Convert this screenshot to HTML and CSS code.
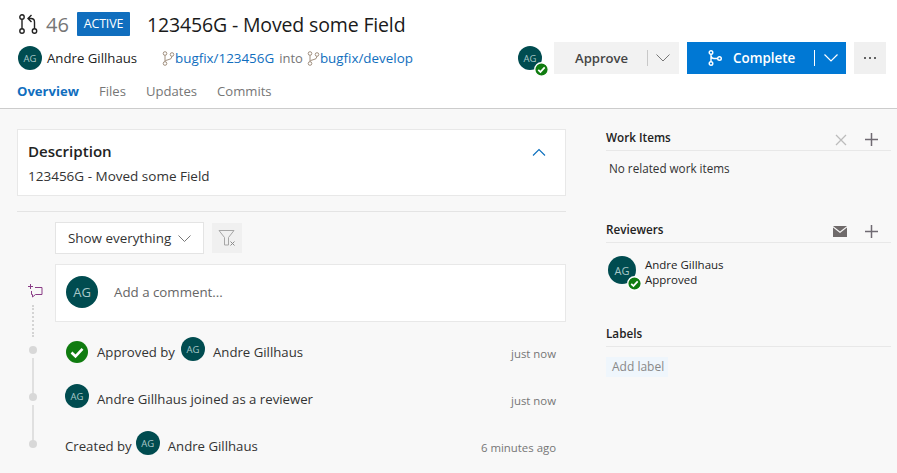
FILE: index.html
```html
<!DOCTYPE html>
<html lang="en">
<head>
<meta charset="utf-8">
<title>Pull request 46</title>
<link rel="stylesheet" href="styles.css">
</head>
<body>
<header class="header">
  <div class="title-row">
    <svg class="pr-icon" width="20" height="20" viewBox="0 0 20 20"><g fill="none" stroke="#222" stroke-width="1.4"><circle cx="4" cy="3" r="2.2"/><circle cx="4" cy="17" r="2.2"/><circle cx="16.500" cy="17" r="2.2"/><path d="M4 5.200v9.600M16.500 14.800V8q0-3.500-3.500-3.500h-2.500M13.500 1l-3.500 3.500 3.500 3.500"/></g></svg>
    <span class="pr-id">46</span>
    <span class="badge">ACTIVE</span>
    <h1 class="pr-title">123456G - Moved some Field</h1>
  </div>
  <div class="meta-row">
    <span class="avatar av24">AG</span>
    <span class="author">Andre Gillhaus</span>
    <svg class="branch first" width="13" height="15" viewBox="0 0 13 15"><g fill="none" stroke="#a08f7e" stroke-width="1"><circle cx="3" cy="2.500" r="1.800"/><circle cx="3" cy="12.500" r="1.800"/><circle cx="10" cy="3.500" r="1.800"/><path d="M3 4.300v6.400M10 5.300q0 3-4 3.500-3 .5-3 1.500"/></g></svg>
    <a class="link">bugfix/123456G</a>
    <span class="into">into</span>
    <svg class="branch" width="13" height="15" viewBox="0 0 13 15"><g fill="none" stroke="#a08f7e" stroke-width="1"><circle cx="3" cy="2.500" r="1.800"/><circle cx="3" cy="12.500" r="1.800"/><circle cx="10" cy="3.500" r="1.800"/><path d="M3 4.300v6.400M10 5.300q0 3-4 3.500-3 .5-3 1.500"/></g></svg>
    <a class="link">bugfix/develop</a>
    <div class="actions">
      <span class="avatar av24 with-status">AG<svg class="status s14" viewBox="0 0 16 16"><circle cx="8" cy="8" r="7.200" fill="#107c10" stroke="#fff" stroke-width="1.400"/><path d="M4.500 8.300l2.400 2.300 4.500-4.800" fill="none" stroke="#fff" stroke-width="1.800"/></svg></span>
      <div class="btn btn-approve"><span class="btn-label">Approve</span><span class="sep"></span><svg class="chev" width="14" height="8" viewBox="0 0 14 8"><path d="M.5.5L7 7l6.500-6.500" fill="none" stroke="#777" stroke-width="1"/></svg></div>
      <div class="btn btn-complete">
        <svg class="complete-icon" width="14" height="16" viewBox="0 0 14 16"><g fill="none" stroke="#fff" stroke-width="1.400"><circle cx="3" cy="2.500" r="1.800"/><circle cx="3" cy="13.500" r="1.800"/><circle cx="11.500" cy="8.500" r="1.800"/><path d="M3 4.300v7.400M3 6q.5 2.500 3 2.500h3.700"/></g></svg>
        <span class="btn-label">Complete</span><span class="sep"></span><svg class="chev" width="14" height="8" viewBox="0 0 14 8"><path d="M.5.5L7 7l6.500-6.500" fill="none" stroke="#fff" stroke-width="1.200"/></svg>
      </div>
      <div class="btn btn-more"><span class="dot3"></span><span class="dot3"></span><span class="dot3"></span></div>
    </div>
  </div>
  <nav class="tabs">
    <a class="tab active">Overview</a>
    <a class="tab">Files</a>
    <a class="tab">Updates</a>
    <a class="tab">Commits</a>
  </nav>
</header>
<main class="main">
  <section class="left">
    <div class="card desc">
      <div class="desc-head">
        <h2 class="desc-title">Description</h2>
        <svg width="14" height="8" viewBox="0 0 14 8"><path d="M1 7.500L7 1.500l6 6" fill="none" stroke="#0a6ebd" stroke-width="1.100"/></svg>
      </div>
      <p class="desc-text">123456G - Moved some Field</p>
    </div>
    <hr class="divider">
    <div class="filter-row">
      <div class="select"><span>Show everything</span><svg width="13" height="7" viewBox="0 0 13 7"><path d="M.5.5l6 6 6-6" fill="none" stroke="#777" stroke-width="1"/></svg></div>
      <div class="filter-btn"><svg width="18" height="18" viewBox="0 0 18 18"><path d="M1 1.500h15l-5.500 7v7.500h-4V8.500z" fill="none" stroke="#a6a6a6" stroke-width="1"/><path d="M12.500 12.500l4 4m0-4l-4 4" stroke="#8a8a8a" stroke-width="1"/></svg></div>
    </div>
    <div class="comment-row">
      <div class="comment-rail">
        <svg class="comment-icon" width="15" height="14" viewBox="0 0 15 14"><path d="M7 3.500h7v7H7.500L4.500 13v-2.500H3.500V7" fill="none" stroke="#8a3c86" stroke-width="1"/><path d="M0 2.500h5M2.500 0v5" stroke="#8a3c86" stroke-width="1"/></svg>
        <span class="dotted"></span>
      </div>
      <div class="card comment">
        <span class="avatar av32">AG</span>
        <span class="placeholder">Add a comment...</span>
      </div>
    </div>
    <div class="activity">
      <div class="rail"><span class="node"></span><span class="stem"></span></div>
      <div class="event">
        <div class="event-main"><svg class="check-big" width="22" height="22" viewBox="0 0 22 22"><circle cx="11" cy="11" r="11" fill="#107c10"/><path d="M5.500 11.500l4 3.800 7-7.500" fill="none" stroke="#fff" stroke-width="2.600"/></svg><span class="approved-label">Approved by</span><span class="avatar av24 raised">AG</span><span>Andre Gillhaus</span></div>
        <time class="when">just now</time>
      </div>
    </div>
    <div class="activity">
      <div class="rail"><span class="node"></span><span class="stem"></span></div>
      <div class="event">
        <div class="event-main"><span class="avatar av24 raised">AG</span><span>Andre Gillhaus joined as a reviewer</span></div>
        <time class="when">just now</time>
      </div>
    </div>
    <div class="activity">
      <div class="rail"><span class="node"></span></div>
      <div class="event">
        <div class="event-main"><span>Created by</span><span class="avatar av24 raised">AG</span><span>Andre Gillhaus</span></div>
        <time class="when">6 minutes ago</time>
      </div>
    </div>
  </section>
  <aside class="right">
    <section class="panel panel-items">
      <div class="panel-head"><h3>Work Items</h3>
        <svg class="tool" width="12" height="12" viewBox="0 0 12 12"><path d="M1 1l10 10M11 1L1 11" stroke="#bcbcbc" stroke-width="1.300"/></svg>
        <svg class="tool" width="13" height="13" viewBox="0 0 13 13"><path d="M6.500 0v13M0 6.500h13" stroke="#6f6a72" stroke-width="1.500"/></svg>
      </div>
      <p class="none">No related work items</p>
    </section>
    <section class="panel panel-reviewers">
      <div class="panel-head"><h3>Reviewers</h3>
        <svg class="tool" width="14" height="11" viewBox="0 0 14 11"><path d="M0 0h14L7 5.500z M0 1.500v9.500h14V1.500L7 7z" fill="#6f6a6a"/></svg>
        <svg class="tool" width="13" height="13" viewBox="0 0 13 13"><path d="M6.500 0v13M0 6.500h13" stroke="#6f6a72" stroke-width="1.500"/></svg>
      </div>
      <div class="reviewer">
        <span class="avatar av28 with-status">AG<svg class="status s14 rv" viewBox="0 0 16 16"><circle cx="8" cy="8" r="7.200" fill="#107c10" stroke="#fff" stroke-width="1.400"/><path d="M4.500 8.300l2.400 2.300 4.500-4.800" fill="none" stroke="#fff" stroke-width="1.800"/></svg></span>
        <div class="reviewer-text"><div>Andre Gillhaus</div><div>Approved</div></div>
      </div>
    </section>
    <section class="panel">
      <div class="panel-head"><h3>Labels</h3></div>
      <span class="chip">Add label</span>
    </section>
  </aside>
</main>
</body>
</html>
```
FILE: styles.css
```css
* { box-sizing: border-box; }
html, body { margin: 0; height: 100%; overflow: hidden; }
body { background: #f8f8f8; color: #333; font-family: "Open Sans", "Noto Sans", sans-serif; font-size: 13px; }
h1, h2, h3, p { margin: 0; font-weight: 400; }

.header { background: #fff; height: 109px; border-bottom: 1px solid #ccc; padding: 0 11px 0 17px; }
.title-row { display: flex; align-items: center; height: 42px; padding: 6px 0 0 1px; }
.pr-id { font-size: 20px; color: #767676; margin-left: 8px; width: 31px; }
.badge { background: #106ebe; color: #fff; width: 53px; height: 24px; line-height: 24px; text-align: center; font-size: 12.500px; border-radius: 1px; letter-spacing: -0.200px; }
.pr-title { font-size: 19.500px; color: #1a1a1a; margin-left: 17px; letter-spacing: -0.150px; white-space: nowrap; }

.meta-row { display: flex; align-items: center; height: 32px; padding-left: 1px; }
.author { color: #222; margin-left: 5px; width: 115px; font-size: 13.200px; white-space: nowrap; }
.link { color: #106ebe; white-space: nowrap; font-size: 13.400px; }
.into { color: #767676; margin: 0 4px 0 5px; font-size: 13px; }
.branch { flex: none; }
.actions { display: flex; align-items: center; margin-left: auto; }
.avatar { display: inline-flex; align-items: center; justify-content: center; flex: none; border-radius: 50%; background: #004c50; color: #a8c8c8; position: relative; }
.av24 { width: 24px; height: 24px; font-size: 9.500px; }
.av28 { width: 28px; height: 28px; font-size: 11px; }
.av32 { width: 32px; height: 32px; font-size: 13px; }
.status { position: absolute; right: -7px; bottom: -7px; }
.s14 { width: 15px; height: 15px; }
.rv { right: -6px; bottom: -7px; }
.btn { height: 32px; display: flex; align-items: center; }
.btn-approve { width: 125px; background: #f2f2f2; color: #333; margin-left: 12px; padding-left: 21px; }
.btn-approve .btn-label { width: 72px; font-weight: 600; font-size: 13.100px; color: #444; white-space: nowrap; }
.btn-approve .sep { background: #c8c8c8; }
.btn-approve .chev { margin-left: 8px; }
.sep { width: 1px; height: 16px; }
.btn-complete { width: 159px; background: #0078d4; color: #fff; margin-left: 8px; padding-left: 21px; }
.btn-complete .btn-label { font-weight: 600; font-size: 13.400px; margin-left: 11px; width: 81px; white-space: nowrap; }
.btn-complete .sep { background: #fff; }
.btn-complete .chev { margin-left: 9px; }
.btn-more { width: 32px; background: #f0f0f0; margin-left: 8px; justify-content: center; gap: 3px; }
.dot3 { width: 2px; height: 2px; background: #333; border-radius: 50%; }

.tabs { display: flex; gap: 20px; height: 24px; align-items: center; margin-top: 5px; font-size: 13.100px; }
.tab { color: #767676; }
.tab.active { color: #106ebe; font-weight: 700; }

.main { display: flex; padding: 20px 6px 0 17px; gap: 40px; }
.left { width: 549px; flex: none; }
.right { flex: 1; }

.card { background: #fff; border: 1px solid #e8e8e8; }
.desc { height: 67px; padding: 11px 10px 0; }
.desc-head { display: flex; justify-content: space-between; align-items: center; padding-right: 9px; height: 22px; }
.desc-title { font-size: 15.100px; font-weight: 600; color: #222; margin-top: -3px; }
.desc-text { margin-top: 4px; color: #333; font-size: 13.500px; white-space: nowrap; }
.divider { border: 0; height: 1px; background: #e4e4e4; margin: 15px 0 10px; }

.filter-row { display: flex; align-items: center; padding-left: 38px; gap: 8px; height: 32px; }
.select { width: 149px; height: 32px; background: #fff; border: 1px solid #e4e4e4; padding: 0 12px; display: flex; align-items: center; justify-content: space-between; font-size: 13.400px; white-space: nowrap; }
.filter-btn { width: 30px; height: 30px; background: #f0f0f0; display: flex; align-items: center; justify-content: center; }

.comment-row { display: flex; margin-top: 10px; height: 58px; }
.comment-rail { width: 38px; flex: none; display: flex; flex-direction: column; align-items: flex-start; padding: 20px 0 0 11px; }
.comment-icon { flex: none; }
.dotted { display: block; flex: none; width: 0; height: 32px; margin: 7px 0 0 4px; border-left: 2px dotted #d4d4d4; }
.comment { flex: 1; display: flex; align-items: center; padding: 0 0 3px 10px; }
.placeholder { margin-left: 16px; color: #666; font-size: 13.300px; }

.activity { display: flex; height: 47px; }
.comment-row + .activity { margin-top: 24px; }
.rail { width: 32px; flex: none; display: flex; flex-direction: column; align-items: center; }
.node { width: 8px; height: 8px; border-radius: 50%; background: #d8d8d8; flex: none; }
.stem { width: 2px; flex: 1; background: #e0e0e0; margin: 4px 0 -4px; }
.event { flex: 1; display: flex; justify-content: space-between; margin-left: 16px; padding-right: 10px; height: 22px; margin-top: -5px; align-items: center; font-size: 13.200px; color: #333; }
.event-main { display: flex; align-items: center; gap: 8px; }
.event-main .raised { margin: -6px 0 0 -4px; }
.event-main .raised:first-child { margin-left: 0; }
.check-big { margin: 0 1px 0 1px; flex: none; }
.approved-label { margin-right: 2px; }
.when { font-size: 11.400px; color: #767676; margin-top: 2px; }

.panel-head { display: flex; align-items: center; height: 22px; border-bottom: 1px solid #e8e8e8; }
.panel-head h3 { font-size: 11.700px; font-weight: 600; color: #222; flex: 1; margin-bottom: 6px; }
.panel-head .tool { margin-right: 14px; }
.panel-head .tool + .tool { margin-left: 4px; margin-right: 13px; }
.panel-items { height: 92px; }
.panel-reviewers { height: 104px; }
.none { margin: 9px 0 0 3px; font-size: 11.700px; color: #333; }
.reviewer { display: flex; margin: 13px 0 0 2px; }
.reviewer-text { margin-left: 9px; font-size: 11.500px; line-height: 16px; padding-top: 1px; color: #222; }
.reviewer-text div + div { margin-top: -1px; }
.chip { display: inline-block; margin-top: 10px; background: #eff6fc; color: #888; font-size: 12px; height: 20px; line-height: 20px; padding: 0 6px; width: 62px; white-space: nowrap; }
```
